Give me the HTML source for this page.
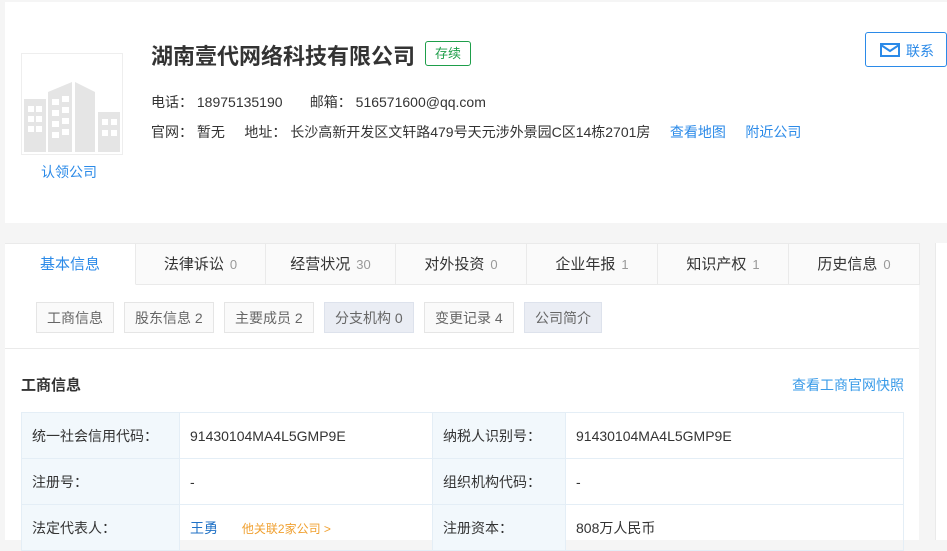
<!DOCTYPE html><html><head><meta charset="utf-8"><style>
body{margin:0;width:947px;height:540px;overflow:hidden;background:#f5f5f5;font-family:"Liberation Sans","Noto Sans CJK SC",sans-serif;color:#333;font-size:14px;position:relative}
.a{position:absolute}
.top{left:5px;top:2px;width:942px;height:221px;background:#fff}
.blue{color:#2b8ae8}
.tab{top:243px;height:42px;border:1px solid #eaeaea;border-left:none;background:#fafafa;box-sizing:border-box;text-align:center;line-height:41px;font-size:15px;color:#333}
.tab span{color:#999;font-size:13px;margin-left:6px}
.sub{top:302px;height:31px;line-height:31px;padding:0 10px;border:1px solid #e5e5e5;background:#fafafa;font-size:14px;color:#666;box-sizing:border-box}
table{border-collapse:collapse;position:absolute;left:21px;top:412px;width:883px;table-layout:fixed}
td{border:1px solid #e4eef6;height:45px;padding:0 10px;font-size:14px;color:#333;white-space:nowrap}
td.l{background:#f2f8fc}
</style></head><body>
<div class="a top"></div>
<div class="a" style="left:21px;top:53px;width:100px;height:100px;border:1px solid #eee;background:#fff">
<svg width="100" height="100"><g fill="#e5e5e5"><rect x="2" y="45" width="22" height="53"/><polygon points="26,38 50,28 50,98 26,98"/><polygon points="53,28 73,38 73,98 53,98"/><rect x="76" y="58" width="22" height="40"/></g><g fill="#fff"><rect x="6" y="52" width="6" height="6"/><rect x="14" y="52" width="6" height="6"/><rect x="6" y="62" width="6" height="6"/><rect x="14" y="62" width="6" height="6"/><rect x="6" y="72" width="6" height="6"/><rect x="14" y="72" width="6" height="6"/><rect x="30" y="45" width="7" height="6"/><rect x="40" y="42" width="7" height="6"/><rect x="30" y="56" width="7" height="6"/><rect x="40" y="53" width="7" height="6"/><rect x="30" y="67" width="7" height="6"/><rect x="40" y="64" width="7" height="6"/><rect x="30" y="78" width="7" height="6"/><rect x="40" y="75" width="7" height="6"/><rect x="80" y="65" width="6" height="6"/><rect x="89" y="65" width="6" height="6"/><rect x="80" y="76" width="6" height="6"/><rect x="89" y="76" width="6" height="6"/></g></svg></div>
<div class="a blue" style="left:41px;top:162px;font-size:14px">认领公司</div>
<div class="a" style="left:151px;top:39px;font-size:22px;font-weight:bold;color:#333">湖南壹代网络科技有限公司</div>
<div class="a" style="left:425px;top:41px;width:44px;height:23px;border:1px solid #1e9e4a;border-radius:3px;color:#1e9e4a;font-size:13px;text-align:center;line-height:23px">存续</div>
<div class="a" style="left:151px;top:92px;font-size:14px">电话： 18975135190 &nbsp; &nbsp; &nbsp; 邮箱： 516571600@qq.com</div>
<div class="a" style="left:151px;top:122px;font-size:14px;word-spacing:0">官网： 暂无 &nbsp; &nbsp; 地址： 长沙高新开发区文轩路479号天元涉外景园C区14栋2701房 &nbsp; &nbsp; <span class="blue">查看地图</span> &nbsp; &nbsp; <span class="blue">附近公司</span></div>
<div class="a" style="left:865px;top:32px;width:82px;height:35px;border:1px solid #2b8ae8;border-radius:3px;box-sizing:border-box;background:#fff">
<svg class="a" style="left:14px;top:10px" width="20" height="14"><rect x="1" y="1" width="18" height="12" fill="none" stroke="#2b8ae8" stroke-width="2"/><polyline points="1,2 10,8 19,2" fill="none" stroke="#2b8ae8" stroke-width="2"/></svg>
<span class="a" style="left:40px;top:8px;color:#2b8ae8;font-size:14px">联系</span></div>
<div class="a" style="left:5px;top:243px;width:914px;height:297px;background:#fff"></div>
<div class="a" style="left:935px;top:243px;width:12px;height:297px;background:#fff;border-left:1px solid #eaeaea"></div>
<div class="a tab" style="left:5px;width:131px;background:#fff;border-bottom-color:#fff;color:#2b8ae8">基本信息</div>
<div class="a tab" style="left:136px;width:130px">法律诉讼<span>0</span></div>
<div class="a tab" style="left:266px;width:130px">经营状况<span>30</span></div>
<div class="a tab" style="left:396px;width:131px">对外投资<span>0</span></div>
<div class="a tab" style="left:527px;width:131px">企业年报<span>1</span></div>
<div class="a tab" style="left:658px;width:131px">知识产权<span>1</span></div>
<div class="a tab" style="left:789px;width:131px">历史信息<span>0</span></div>
<div class="a sub" style="left:36px">工商信息</div>
<div class="a sub" style="left:124px">股东信息 2</div>
<div class="a sub" style="left:224px">主要成员 2</div>
<div class="a sub" style="left:324px;background:#eaedf4;border-color:#dde2ec">分支机构 0</div>
<div class="a sub" style="left:424px">变更记录 4</div>
<div class="a sub" style="left:524px;background:#eaedf4;border-color:#dde2ec">公司简介</div>
<div class="a" style="left:5px;top:348px;width:914px;height:1px;background:#eaeaea"></div>
<div class="a" style="left:21px;top:374px;font-size:15px;font-weight:bold">工商信息</div>
<div class="a" style="left:792px;top:375px;font-size:14px;color:#3a9be8">查看工商官网快照</div>
<table>
<colgroup><col style="width:158px"><col style="width:253px"><col style="width:133px"><col></colgroup>
<tr><td class="l">统一社会信用代码：</td><td>91430104MA4L5GMP9E</td><td class="l">纳税人识别号：</td><td>91430104MA4L5GMP9E</td></tr>
<tr><td class="l">注册号：</td><td>-</td><td class="l">组织机构代码：</td><td>-</td></tr>
<tr><td class="l">法定代表人：</td><td><span style="color:#2172c6">王勇</span> <span style="color:#f0a030;font-size:12px;margin-left:20px">他关联2家公司 &gt;</span></td><td class="l">注册资本：</td><td>808万人民币</td></tr>
</table>
</body></html>
